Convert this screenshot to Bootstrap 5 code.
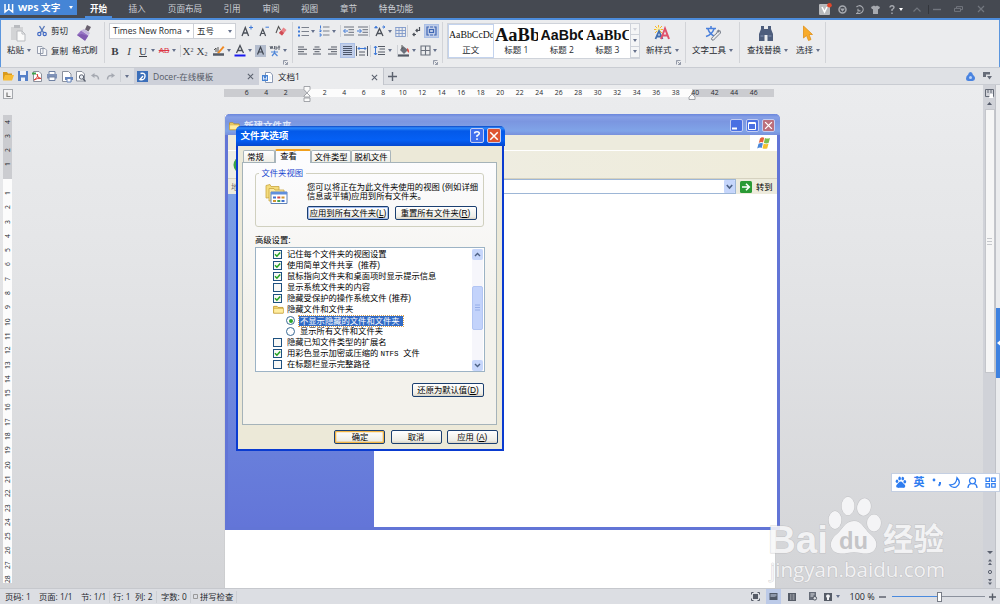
<!DOCTYPE html>
<html lang="zh-CN">
<head>
<meta charset="utf-8">
<title>WPS 文字 - 文档1</title>
<link href="https://cdn.jsdelivr.net/npm/bootstrap@5.3.0/dist/css/bootstrap.min.css" rel="stylesheet">
<script src="https://cdn.jsdelivr.net/npm/bootstrap@5.3.0/dist/js/bootstrap.bundle.min.js"></script>
<style>
*{box-sizing:border-box}
body{width:1000px;height:604px;overflow:hidden;margin:0;font:8.5px/12px "Open Sans","Noto Sans CJK SC",sans-serif;color:#25282e;background:#ebecee}
svg{display:block;overflow:visible;flex:none}
.tracks{display:grid;justify-items:start;align-items:center;white-space:nowrap}
.caret{width:0;height:0;border:2.5px solid transparent;border-top:3px solid #66718c;border-bottom:0}
.vsep{width:1px;height:12px;background:#cdd0d5}
.ml2{margin-left:2px}
/* title bar */
.titlebar{height:20px;background:#454951;border-bottom:2px solid #4c8cdb;color:#cdd0d6;font-size:8.6px}
.brand{width:76.5px;height:15px;background:#4585d6;color:#fff;font-weight:700;font-size:9.6px;padding-left:4px;gap:4px}
.brand .caret,.helpmark .caret{border-top-color:#fff}
.menus{grid-template-columns:39px 38px 58px 36px 42px 35px 43px 52px;justify-items:center;margin-left:2.5px;height:18px}
.menus>*{height:18px;line-height:18px}
.menus .on{color:#fff;font-weight:700;border-bottom:2px solid #4c8cdb;padding:0 4.5px}
.sysicons{grid-template-columns:19px 17px 16px 18px 24.5px 14.5px 5px 21px 23.5px 16px;margin-left:396.5px;height:18px}
.sysicons .vsep{background:#33363c;height:9px}
/* ribbon */
.ribbon{height:47px;border-left:1px solid #5b96de;border-right:1px solid #5b96de;background:#ebecee}
.grp{position:relative;border-right:1px solid #d2d4d8;height:41px;margin-top:2px}
.g1{width:104px;padding-left:4px}.g2{width:188px;padding-left:4px}.g3{width:150px}.g4{width:243px;padding-left:4px}.g5{width:54px;padding-left:6px}.g6{width:86px;padding-left:7px}
.ic{height:22px;display:flex;align-items:center;justify-content:center}
.bigb{height:38px}
.bigb .lbl{display:flex;align-items:center;gap:3px;height:12px}
.bigb.paste{margin-right:6px}.bigb.paste .lbl{padding-left:2px}
.bigb.newst{margin-left:6px}
.r1{height:18px}.r2{height:21px}
.launch{position:absolute;right:4px;bottom:-2px}
.combo{height:16px;background:#fff;border:1px solid #cdd0d6;display:flex;align-items:center;justify-content:space-between;padding:0 3px}
.combo.sz{width:42px}
.t2a{grid-template-columns:85px 47px 17px 17px 14px}
.t2b{grid-template-columns:14px 14px 13.5px 7.5px 13.5px 8px 2.5px 14px 17px 13.5px 7.5px 13.5px 7.5px 14px 13.5px 6px}
.t3a{grid-template-columns:13px 8px 12.5px 8.5px 3px 14px 12px 5px 13.5px 7.5px 12px 5px 13px 14px;padding-left:5px}
.t3b{grid-template-columns:15px 14.5px 14.5px 15px 14px 4px 13.5px 9.5px 1px 13.5px 8.5px 12.5px 6px;padding-left:4px}
.hl{background:#c0cde8;outline:1px solid #aabfe6}
.ser{font-family:"Liberation Serif",serif;font-size:11px;width:12px;text-align:center;line-height:14px;color:#3b3f47}
.ser.sm{font:8px/14px "Liberation Sans",sans-serif}
.ser sup,.ser sub{font-size:6px}
.gallery{width:193px;height:36px;border:1px solid #cfd3da;background:#fff;margin-top:1px}
.sty{width:45.6px;height:34px;overflow:hidden;text-align:center}
.sty .s{display:block;height:20px;margin:0 1.5px;line-height:22px;font-family:"Liberation Serif",serif;white-space:nowrap;color:#111;overflow:hidden;text-align:left}
.sty.on{outline:1.5px solid #c3d3ee;outline-offset:-1px}
.sty .f0{font-size:9.8px;margin:0 1px}.f1{font-size:18.5px}.sty .f2{font:700 14.2px/22px "Liberation Sans"}.f3{font-size:14.5px}
.gscroll{width:9px;border-left:1px solid #cfd3da;background:#f4f5f6}
.gscroll>*{height:33.3%;display:flex;align-items:center;justify-content:center;border-bottom:1px solid #cfd3da}
/* document tabs */
.docbar{height:18px;background:#dfe1e5;border-top:1px solid #c9ccd2;border-bottom:1px solid #c9ccd2}
.quick{grid-template-columns:15px 14.5px 14.5px 15px 14.5px 14.5px 15px 14px 5px 10px;padding-left:2.5px;width:134px}
.dtab{height:17px;width:125px;padding:0 5px 0 3px;gap:5px}
.dtab.off{background:#cdd0d9;color:#555a66}.dtab.on{background:#ebecee;border-right:1px solid #c2c5cc;height:18px}
/* workspace */
.work{position:relative;height:503px;background:linear-gradient(#ebecee,#e4e5e7 35%,#d3d4d7);overflow:hidden}
.hruler{height:8px;width:550px;margin:4px 0 0 224px;padding-left:13px;background:linear-gradient(90deg,#cbccd0 82.5px,#fcfcfc 82.5px 468px,#cbccd0 468px);font:6.8px/8px "Open Sans",sans-serif}
.hruler span{width:19.5px;text-align:center;flex:none}
.vruler{position:absolute;left:3px;top:29.5px;width:9px;height:468px;background:linear-gradient(#cbccd0 64.5px,#fcfcfc 64.5px);font:6.8px/9px "Open Sans",sans-serif;overflow:hidden}
.vruler span{display:flex;align-items:center;justify-content:center;height:14.3px;transform:rotate(-90deg);width:9px}
.corner{position:absolute;left:2.5px;top:3.5px;width:10.5px;height:10.5px;border:1px solid #a6a9ae;background:#f4f4f5}
.mark1{position:absolute;left:303px;top:1px}.mark2{position:absolute;left:687.5px;top:9px}
.sheet{position:absolute;left:225px;top:30px;width:550px;height:473px;background:#fff;box-shadow:0 0 1px #aaa}
.vscroll{position:absolute;left:983px;top:0;width:13px;height:503px;background:#d0d2d8;border-right:1px solid #c0c2c8}
.edge{position:absolute;left:996px;top:0;width:4px;height:503px;background:#ebecee}
.handle{margin-top:223px;height:70px;background:#3f82e0}
.thumb{width:10px;height:264px;margin:0 0 0 1.5px;background:#f6f6f6;border:1px solid #c4c6cb}
.vbtns{margin:178px 0 0 3.5px}
/* explorer window */
.xp{font-family:"Liberation Sans","Noto Sans CJK SC",sans-serif;color:#000}
.explorer{position:absolute;left:225px;top:29px;width:555px;height:416px;border:3px solid #6275d6;border-top:0;border-radius:5px 5px 0 0;background:#fff}
.extitle{height:21px;margin:0 -3px;border-radius:5px 5px 0 0;background:linear-gradient(#6a86dc,#86a0e6 15%,#7b96e0 35%,#80a4e8 80%,#7890dc);padding:2px 5px 0 4px;color:#e0e8fa;font-size:9.5px;font-weight:700}
.wb{width:13.5px;height:13.5px;border:1px solid #c3cdf2;border-radius:2px;background:#4a70e2;display:flex;align-items:center;justify-content:center}
.wb.cl{background:#bb6f7c}
.wgap{gap:2.5px}
.exmenu{height:16px;background:#edebdd;border-bottom:1px solid #fff}
.flag{width:27px;height:15px;background:#fff;display:flex;align-items:center;justify-content:center}
.extool{height:28px;background:linear-gradient(90deg,#eeeee6,#efecdb);border-bottom:1px solid #d6d2c0}
.exaddr{height:15px;background:#edebdd;font-size:8.3px;white-space:nowrap}
.exlab{width:25px;padding-left:3px;color:#777}
.exfield{width:483px;height:15px;border:1px solid #9db6d6;background:#fff;display:flex;justify-content:flex-end}
.exside{width:145.5px;height:333px;background:linear-gradient(#7ba0e6,#6375d8)}
/* options dialog */
.dlg{position:absolute;left:236px;top:40.5px;width:268px;height:325.5px;border:solid #0a3bd0;border-width:0 2.5px 2.5px;border-radius:5px 5px 0 0;background:#ece9d8;font-size:8.3px;line-height:9px}
.dtitle{height:20px;margin:0 -2.5px;padding:0 3.5px 0 5px;border-radius:5px 5px 0 0;background:linear-gradient(#0947c4,#2e8afc 10%,#0459e8 25%,#0560f5 70%,#0548cf);color:#fff;font-weight:700;font-size:9.6px}
.dtitle .wb{width:14.5px;height:14.5px;background:#3f6fee}.dtitle .wb.cl{background:#de5430}
.tabs{height:16px;padding:0 0 0 5px;align-items:flex-end}
.tb{height:12px;border:1px solid #a9b5bb;border-bottom:0;border-radius:2px 2px 0 0;background:linear-gradient(#fff,#efeee6);text-align:center;line-height:12.5px}
.tb.on{height:14px;border-top:2px solid #f0a01e;background:#fcfcfe;margin-bottom:-1px;z-index:1;line-height:10px}
.tw1{width:32px;padding-right:7px}.tw2{width:36px;padding-right:9px}.tw3{width:40px}
.panel{width:255px;height:263px;margin-left:4px;border:1px solid #a5b3b9;background:linear-gradient(#fcfcfe,#f3f2ec 55%);padding:5px 12px 0}
.fs{height:59px;width:229px;position:relative}
.fs .box{position:absolute;inset:5px 0 0 0;border:1px solid #d0d0bf;border-radius:3px}
.fs .cap{position:absolute;left:4px;top:1px;padding:0 2.5px;background:#fbfbfc;color:#1745cf;line-height:9px}
.fsin{padding:16.5px 0 0 10px}
.fstext{margin-left:19px;margin-top:-1px;line-height:8.6px;white-space:nowrap}
.fsbtn{gap:5.5px;margin-top:5.5px}
.advlab{margin:9.5px 0 2px}
.xbtn{border:1px solid #1b3f70;border-radius:2px;background:linear-gradient(#fff,#eeede6 80%,#d8d2c4);text-align:center;height:14px;line-height:12px;white-space:nowrap}
.xbtn.foc{box-shadow:inset 0 0 0 1px #a3bdf0}.xbtn.def{box-shadow:inset 0 0 0 1.3px #f3b544}
.b1{width:82px}.b2{width:82px}.b3{width:72px}.b4{width:51px}
.xl{width:230px;height:125px;border:1px solid #9cb3c5;background:#fff;padding:.5px 1px 0 17px}
.xl .item{height:11.1px;display:flex;align-items:center;gap:5px;white-space:pre}
.xl .item.fo{gap:3px}
.ck{width:9px;height:9px;border:1px solid #1e5180;background:#f8f8f6;flex:none}
.rd{width:9px;height:9px;border:1px solid #3a6a95;border-radius:50%;background:#fff;flex:none;margin-left:13px;display:flex;align-items:center;justify-content:center}
.rd.on::after{content:"";width:4px;height:4px;border-radius:50%;background:#2aa52a}
.sel{background:#316ac5;color:#fff;outline:1px dotted #d8a050;line-height:10px;width:104px;margin-left:-1px;padding-left:1px}
.ntfs{font-family:"Liberation Mono",monospace;font-size:7.5px}
.xsb{width:11px;height:121px;background:#f6f6fb}
.xsb .sb{height:11px;background:#c6d6fb;border-radius:2px;display:flex;align-items:center;justify-content:center}
.xsb .up{transform:scaleY(-1)}
.xsb .th{height:44px;margin-top:26px;margin-bottom:30px;background:#c3d3fb;border:1px solid #b2c5f3;border-radius:2px;display:flex;align-items:center;justify-content:center}
.resetrow{margin-top:11px;width:229px}
.okrow{gap:5.2px;padding:5.5px 4.2px 0 0}
/* overlays */
.ime{position:absolute;left:890.5px;top:387.5px;width:109.5px;height:19px;background:#fff;border:1px solid #c4cfe2;color:#2f7df0;font-weight:700;font-size:11px;padding:0 3px}
.logo{position:absolute;left:766px;top:408px}
/* status bar */
.status{height:16px;background:#dcdee3;border-top:1px solid #c6c8cd}
.st1{grid-template-columns:34px 42px 28px 4px 22px 21px 5px 29px 3px 7px 35.5px 2px;padding-left:5px;font-size:8.3px;width:740px}
.st2{grid-template-columns:16.5px 19px 18.5px 15px 14px 14px 29px 13px 95px 10px;padding-left:10.5px}
.st2 .act{margin-left:-1px}
.pct{font-size:9px}
.slider{width:93px;height:8px;display:flex;align-items:center}
.slider .a{width:45px;height:1px;background:#4a8ade}.slider .b{width:43px;height:1px;background:#8b919d}.slider .k{width:5px;height:10px;border:1px solid #777c86;background:#fff}
</style>
</head>
<body class="d-flex flex-column">
<svg width="0" height="0" class="position-absolute">
 <defs>
  <symbol id="fold" viewBox="0 0 12 10"><path d="M.5 9V1.500h4l1 1.200H11V9z" fill="#f4d873" stroke="#b88a1c" stroke-width=".8"/><path d="M.6 9V3.800h10.900V9z" fill="#ffeda0" stroke="#c49b30" stroke-width=".6"/></symbol>
  <symbol id="xx" viewBox="0 0 8 8"><path d="M1 1l6 6M7 1L1 7" stroke="currentColor" stroke-width="1.2"/></symbol>
  <symbol id="tick" viewBox="0 0 7 7"><path d="M1 3.200l1.900 2L6.200 1.400" fill="none" stroke="#21a121" stroke-width="1.500"/></symbol>
  <symbol id="chev" viewBox="0 0 8 6"><path d="M1 1.300l3 3 3-3" fill="none" stroke="#4d6185" stroke-width="1.700"/></symbol>
  <symbol id="lau" viewBox="0 0 5 5"><path d="M.5 4.500v-4h4M2 4.500h2.500V2M1.600 1.600l2.600 2.600" fill="none" stroke="#7f8797" stroke-width=".8"/></symbol>
  <symbol id="paw" viewBox="0 0 54 60"><ellipse cx="7" cy="26" rx="6.400" ry="9"/><ellipse cx="20" cy="12" rx="6.400" ry="9.300"/><ellipse cx="36" cy="13" rx="6.800" ry="8.800" transform="rotate(12 36 13)"/><ellipse cx="46" cy="29" rx="7" ry="8.400"/><path d="M26 27c8 0 10 8 16 13s8 10 5 15-9 5-14 4-9-1-14 0-12 1-15-4 0-11 5-15 8-13 17-13z"/></symbol>
 </defs>
</svg>

<header class="titlebar d-flex">
 <div class="brand d-flex align-items-center"><svg width="10" height="10" viewBox="0 0 10 10"><path d="M1 1v8l3.800-3L8.600 9V1M4.800 1v5" fill="none" stroke="#fff" stroke-width="1.500"/></svg><span class="me-auto">WPS 文字</span><i class="caret me-1"></i></div>
 <nav class="menus tracks"><span class="on">开始</span><span>插入</span><span>页面布局</span><span>引用</span><span>审阅</span><span>视图</span><span>章节</span><span>特色功能</span></nav>
 <div class="sysicons tracks">
  <svg width="13" height="12" viewBox="0 0 13 12"><rect y="1" width="11" height="11" rx="1" fill="#b8babd"/><path d="M3 4l2.500 5L8 4" fill="none" stroke="#fff" stroke-width="1.600"/><circle cx="10.500" cy="2.200" r="2.300" fill="#e2472b"/></svg>
  <svg width="9" height="9" viewBox="0 0 9 9"><circle cx="4.500" cy="4.500" r="3.500" fill="none" stroke="#a6a9af" stroke-width="1.500"/><path d="M2 3.600h5L4.500 6.700z" fill="#a6a9af"/></svg>
  <svg width="9" height="9" viewBox="0 0 9 9"><path d="M1.500 2A3.800 3.800 0 1 1 2 7.500M1 8.500h4M3 3.800v2h2.500" fill="none" stroke="#a6a9af" stroke-width="1.200"/></svg>
  <svg width="9" height="9" viewBox="0 0 9 9"><path d="M0 2L3 .5q1.500 1.400 3 0L9 2 8 4.300 7 4v5H2V4l-1 .3z" fill="#a6a9af"/></svg>
  <span class="helpmark d-flex align-items-center gap-1"><svg width="6" height="9" viewBox="0 0 6 9"><path d="M1 2.500Q1 .8 3 .8t2 1.800Q5 3.600 3 4.600V6M3 7.400V9" fill="none" stroke="#a6a9af" stroke-width="1.400"/></svg><i class="caret"></i></span>
  <svg width="8" height="5" viewBox="0 0 8 5"><path d="M.5 4.500L4 1l3.500 3.500" fill="none" stroke="#72767e" stroke-width="1.200"/></svg>
  <i class="vsep"></i>
  <svg width="8" height="3" viewBox="0 0 8 3"><path d="M0 1.500h8" stroke="#72767e" stroke-width="1.400"/></svg>
  <svg width="9" height="6" viewBox="0 0 9 6"><path d="M2.500 2V.6h6v3H7M.5 2.400h6v3h-6z" fill="none" stroke="#72767e"/></svg>
  <svg width="8" height="8" color="#72767e"><use href="#xx"/></svg>
 </div>
</header>

<section class="ribbon d-flex">
 <div class="grp g1 d-flex">
  <div class="bigb paste"><div class="ic"><svg width="16" height="17" viewBox="0 0 16 17"><path d="M1 2h12v13H1z" fill="#d3d4d6"/><path d="M4 0h6v3H4z" fill="#b9bbbf"/><path d="M7 6h5l3 3v7H7z" fill="#fafafa" stroke="#b9bbbf"/><path d="M12 6v3h3" fill="none" stroke="#b9bbbf"/></svg></div><div class="lbl">粘贴<i class="caret"></i></div></div>
  <div class="me-1"><div class="d-flex align-items-center r1 gap-1"><svg width="10" height="10" viewBox="0 0 10 10"><path d="M2.500 0l4 6.700M7.500 0l-4 6.700" stroke="#5778b8" stroke-width="1.300"/><circle cx="2.300" cy="8" r="1.600" fill="none" stroke="#3f68c4" stroke-width="1.200"/><circle cx="7.700" cy="8" r="1.600" fill="none" stroke="#3f68c4" stroke-width="1.200"/></svg>剪切</div>
  <div class="d-flex align-items-center r2 gap-1"><svg width="10" height="10" viewBox="0 0 10 10"><path d="M.5.500h4.500l1 1v6H.500zM3.500 2.500H8l1.700 1.700v5.300H3.500z" fill="#f6f7f9" stroke="#8c94a6" stroke-width=".9"/></svg>复制</div></div>
  <div class="bigb"><div class="ic"><svg width="15" height="16" viewBox="0 0 15 16"><path d="M10 0l4 2-2.500 4.500L8 4.500z" fill="#68606e"/><path d="M4 5.500l3-1.500 6 4-1.500 2z" fill="#c3b5dc"/><path d="M4 5.500l7.500 5L8 15.800 0 10z" fill="#9673c4"/><path d="M0 10l5-1 6 2-3 4.800z" fill="#8059b0"/></svg></div><div class="lbl">格式刷</div></div>
 </div>
 <div class="grp g2">
  <div class="tracks t2a r1">
   <div class="combo w-100"><span>Times New Roma</span><i class="caret"></i></div><div class="combo sz border-start-0"><span>五号</span><i class="caret"></i></div>
   <svg width="12" height="12" viewBox="0 0 12 12"><path d="M1 11L4.300 2.500 7.600 11M2.300 8h4" fill="none" stroke="#4a4f58" stroke-width="1.300"/><path d="M10 .5v4M8 2.500h4" stroke="#3f7ad8"/></svg>
   <svg width="12" height="12" viewBox="0 0 12 12"><path d="M2 11l2.800-7 2.800 7M3 8.500h3.600" fill="none" stroke="#4a4f58" stroke-width="1.200"/><path d="M7.500 2.200H11" stroke="#3f7ad8"/></svg>
   <svg width="12" height="12" viewBox="0 0 12 12"><path d="M1 8L3.500 1.500 5.500 5" fill="none" stroke="#555" stroke-width="1.100"/><path d="M4 8l4.500-5.500L11.500 5 7 10.500z" fill="#e8848a"/><path d="M4 8l2-2.500L9 8l-2 2.500z" fill="#d04c55"/></svg>
  </div>
  <div class="tracks t2b r2">
   <b class="ser">B</b><i class="ser">I</i><u class="ser">U</u><i class="caret"></i>
   <s class="ser sm text-danger">AB</s><i class="caret"></i><i class="vsep"></i>
   <span class="ser">X<sup>2</sup></span><span class="ser">X<sub>2</sub></span>
   <svg width="12" height="12" viewBox="0 0 12 12"><path d="M1 5l2-2v4M5 7V2" stroke="#555" fill="none"/><path d="M4 8l6-7 1.500 1.200L6 8.500z" fill="#f08a24"/><path d="M0 9.500h11" stroke="#555b66" stroke-width="2.500"/></svg><i class="caret"></i>
   <svg width="12" height="12" viewBox="0 0 12 12"><path d="M2.500 8L6 .5 9.500 8M4 5.500h4" fill="none" stroke="#4a4f58" stroke-width="1.300"/><path d="M.5 10.500h11" stroke="#1a1af0" stroke-width="2"/></svg><i class="caret"></i>
   <svg width="11" height="12" viewBox="0 0 11 12"><path d="M0 0h11v12H0z" fill="#b4bdce"/><path d="M2.500 9.500L5.500 2l3 7.500M3.500 7h4" fill="none" stroke="#3c424d" stroke-width="1.200"/></svg>
   <svg width="12" height="12" viewBox="0 0 12 12"><path d="M1 1l1 3 1-3 1 3M5.500 1v3h2.500V2H6M10 .5V5M8.800 2h2.400" fill="none" stroke="#555b66" stroke-width=".9"/><path d="M2 7h7M5.500 5.500V8L3 11M5.500 8L8.500 11" fill="none" stroke="#4f86d8" stroke-width="1.200"/></svg><i class="caret"></i>
  </div>
  <svg class="launch" width="5" height="5"><use href="#lau"/></svg>
 </div>
 <div class="grp g3">
  <div class="tracks t3a r1">
   <svg width="12" height="11" viewBox="0 0 12 11"><path d="M3.500 1.500H11M3.500 5.500H11M3.500 9.500H11" stroke="#7b818d"/><path d="M0 1.500h2M0 5.500h2M0 9.500h2" stroke="#3f7ad8" stroke-width="2"/></svg><i class="caret"></i>
   <svg width="12" height="12" viewBox="0 0 12 12"><path d="M4 2h6.500M4 6h6.500M4 10h6.500" stroke="#7b818d"/><path d="M1.500.500v3M.5 5h1.500v1.500H.5M.5 9h1.500v2H.5" fill="none" stroke="#3f7ad8"/></svg><i class="caret"></i><i class="vsep"></i>
   <svg width="11" height="10" viewBox="0 0 11 10"><path d="M1 1h10M5.500 3.700H11M5.500 6.300H11M1 9h10" stroke="#6a707c"/><path d="M5 5H1M2.500 3L.5 5l2 2" fill="none" stroke="#3f7ad8"/></svg>
   <svg width="11" height="10" viewBox="0 0 11 10"><path d="M1 1h10M5.500 3.700H11M5.500 6.300H11M1 9h10" stroke="#6a707c"/><path d="M0 5h4M2.500 3l2 2-2 2" fill="none" stroke="#3f7ad8"/></svg><i class="vsep"></i>
   <svg width="12" height="12" viewBox="0 0 12 12"><path d="M2 11L5.500 3.500 9 11M3.500 8.500h4" fill="none" stroke="#4a4f58" stroke-width="1.300"/><path d="M.5 3l1.500-2 1.500 2zM8 2h3M9.500.5L11 2 9.500 3.500" fill="#3f7ad8" stroke="#3f7ad8" stroke-width=".7"/></svg><i class="caret"></i>
   <svg width="11" height="11" viewBox="0 0 11 11"><path d="M.5 1.500h10M.5 4.500h10M.5 7.500h10M.5 10.500h10M.8 1v9.500M4 1v9.500M7.200 1v9.500M10.500 1v9.500" stroke="#7f98c8" stroke-width=".9"/></svg><i class="vsep"></i>
   <svg width="10" height="11" viewBox="0 0 10 11"><path d="M7.500 1v3.500H4M5.500 3L4 4.500 5.500 6M4 8.500H1M2.500 7L1 8.500 2.500 10" fill="none" stroke="#4a4f58" stroke-width="1.200"/></svg>
   <svg class="hl" width="13" height="12" viewBox="0 0 13 12"><path d="M4 2H2v8h2M9 2h2v8H9M4.500 4.500h4v3h-4zM5 2h3M5 10h3" fill="none" stroke="#3e66b4" stroke-width="1.200"/></svg>
  </div>
  <div class="tracks t3b r2">
   <svg width="10" height="9" viewBox="0 0 10 9"><path d="M1 1h6M1 3.300h9M1 5.700h6M1 8h9" stroke="#555b66"/></svg>
   <svg width="10" height="9" viewBox="0 0 10 9"><path d="M2.500 1h5M1 3.300h8M2.500 5.700h5M1 8h8" stroke="#555b66"/></svg>
   <svg width="10" height="9" viewBox="0 0 10 9"><path d="M4 1h6M1 3.300h9M4 5.700h6M1 8h9" stroke="#555b66"/></svg>
   <svg class="hl" width="13" height="13" viewBox="0 0 13 13"><path d="M2 2.500h9M2 4.500h9M2 6.500h9M2 8.500h9M2 10.500h9" stroke="#4c566b"/></svg>
   <svg width="12" height="10" viewBox="0 0 12 10"><path d="M.5 0v10M11.500 0v10M3 6h6M3 9h6" stroke="#555b66"/><path d="M2 2.500h8M3.500 1L2 2.500 3.500 4M8.500 1L10 2.500 8.500 4" fill="none" stroke="#3f7ad8"/></svg><i class="vsep"></i>
   <svg width="12" height="11" viewBox="0 0 12 11"><path d="M4 1.500h7M5.500 4h5.500M4 7h7M4 9.500h7" stroke="#555b66" stroke-width="1.200"/><path d="M1.500 1v9M0 3l1.500-2L3 3M0 8l1.500 2L3 8" fill="none" stroke="#3f7ad8"/></svg><i class="caret"></i><i class="vsep"></i>
   <svg width="12" height="12" viewBox="0 0 12 12"><path d="M5 1l5 4-4 4-4-4z" fill="#6b707b"/><path d="M4 0v4" stroke="#555"/><path d="M9 3q2.500 1 2 5L9 6z" fill="#d9534a"/><path d="M0 10.500h11" stroke="#555b66" stroke-width="2.200"/></svg><i class="caret"></i>
   <svg width="11" height="11" viewBox="0 0 11 11"><path d="M1 1h9v9H1zM5.500 1v9M1 5.500h9" fill="none" stroke="#6a707c" stroke-width="1.100"/></svg><i class="caret"></i>
  </div>
  <svg class="launch" width="5" height="5"><use href="#lau"/></svg>
 </div>
 <div class="grp g4 d-flex">
  <div class="gallery d-flex">
   <div class="sty on"><span class="s f0">AaBbCcDd</span>正文</div>
   <div class="sty"><b class="s f1">AaBb</b>标题 1</div>
   <div class="sty"><b class="s f2">AaBbC</b>标题 2</div>
   <div class="sty"><b class="s f3">AaBbC</b>标题 3</div>
   <div class="gscroll"><div><i class="caret opacity-25"></i></div><div><i class="caret"></i></div><div><i class="caret"></i></div></div>
  </div>
  <div class="bigb newst"><div class="ic"><svg width="16" height="16" viewBox="0 0 16 16"><path d="M4.500 0v8M1 1l7 7M8 1L1 8M0 4.500h9" stroke="#f5b52c"/><circle cx="4.500" cy="4.500" r="2.200" fill="#fff2a0"/><path d="M1.500 14L5 6l3.500 8M3 11.500h4" fill="none" stroke="#416fb0" stroke-width="1.800"/><path d="M7 14L11 3.500 15 14M8.500 10.500h5" fill="none" stroke="#e0526c" stroke-width="2"/></svg></div><div class="lbl">新样式<i class="caret"></i></div></div>
  <svg class="launch" width="5" height="5"><use href="#lau"/></svg>
 </div>
 <div class="grp g5"><div class="bigb"><div class="ic pe-1"><svg width="17" height="16" viewBox="0 0 17 16"><path d="M1 3.500h10M6 1v2.500M3 4q1.500 5 7 7.500M9 4Q7 9.500 1 11.500" fill="none" stroke="#4a80dc" stroke-width="1.500"/><path d="M15 5.500q1.500 3-1 4l-4 4q-1.500 2.500-3 1.500t1-3.500l4-3.500q0-3 1.800-3l-.5 2.200z" fill="#e9eaec" stroke="#737a88"/></svg></div><div class="lbl text-nowrap">文字工具<i class="caret"></i></div></div></div>
 <div class="grp g6 d-flex"><div class="bigb me-2"><div class="ic pe-1"><svg width="16" height="15" viewBox="0 0 16 15"><path d="M3 0h3v3h4V0h3v3l2 5v7H9.500V9h-3v6H1V8l2-5z" fill="#4d5d7c"/><path d="M2.500 10h3M10.500 10h3" stroke="#8494b5"/></svg></div><div class="lbl">查找替换<i class="caret"></i></div></div>
 <div class="bigb"><div class="ic"><svg width="10" height="15" viewBox="0 0 10 15"><path d="M.5 0l9 8.500H6l2 5-2.500 1-2-5L.5 12z" fill="#f8ab2a" stroke="#e08f18" stroke-width=".8"/></svg></div><div class="lbl">选择<i class="caret"></i></div></div></div>
</section>

<section class="docbar d-flex">
 <div class="quick tracks">
  <svg width="11" height="9" viewBox="0 0 11 9"><path d="M0 8V0h4l1 1.500h4V3" fill="#d99a1c"/><path d="M0 8.500L2 3h9L9 8.500z" fill="#f8bc35"/></svg>
  <svg width="10" height="10" viewBox="0 0 10 10"><path d="M0 0h10v10H0z" fill="#5580c8"/><path d="M2 0h6v4H2zM3 6.500h4V10H3z" fill="#eef2fa"/></svg>
  <svg width="10" height="11" viewBox="0 0 10 11"><path d="M1.500.500H7l2.500 2.500v7.500h-8z" fill="#fff" stroke="#8b919d"/><path d="M2 9q5-3 3-6 0 4 4 4.500-4-.5-7 1.500" fill="none" stroke="#dc4038"/><path d="M0 2.500h4" stroke="#3fa04a" stroke-width="2"/></svg>
  <svg width="10" height="10" viewBox="0 0 10 10"><path d="M2 3V.5h6V3" fill="#fff" stroke="#7082a4"/><path d="M0 3h10v4.500H0z" fill="#7f92b8"/><path d="M2 6h6v3.500H2z" fill="#fff" stroke="#7082a4"/></svg>
  <svg width="11" height="11" viewBox="0 0 11 11"><path d="M.5.500h6L9 3v7.500H.5z" fill="#fff" stroke="#8b919d"/><path d="M3 6h8v3H3z" fill="#6484bd"/><path d="M5 7.500h4V11H5z" fill="#fff" stroke="#6484bd"/></svg>
  <svg width="10" height="11" viewBox="0 0 10 11"><path d="M.5.500H6L8.500 3v7H.5z" fill="#fff" stroke="#8b919d"/><circle cx="5.500" cy="6" r="2.200" fill="#e8ecf3" stroke="#59606e"/><path d="M7 7.800L9.500 10.500" stroke="#59606e" stroke-width="1.300"/></svg>
  <svg width="9" height="7" viewBox="0 0 9 7"><path d="M3.500 0v5L0 2.500z" fill="#a5a9b1"/><path d="M3 2.500q4.500-.5 4.500 4" fill="none" stroke="#a5a9b1" stroke-width="1.500"/></svg>
  <svg width="9" height="7" viewBox="0 0 9 7"><path d="M5.500 0v5L9 2.500z" fill="#a5a9b1"/><path d="M6 2.500Q1.500 2 1.500 6.500" fill="none" stroke="#a5a9b1" stroke-width="1.500"/></svg>
  <i class="vsep"></i><i class="caret"></i>
 </div>
 <div class="dtab off d-flex align-items-center"><svg width="11" height="11" viewBox="0 0 11 11"><path d="M0 0h11v11H0z" fill="#3b6fba"/><path d="M3.500 2.500q5-1 4.500 3t-5 3L6 5" fill="none" stroke="#fff" stroke-width="1.400"/></svg><span class="me-auto">Docer-在线模板</span><svg width="7" height="7" color="#5b616e"><use href="#xx"/></svg></div>
 <div class="dtab on d-flex align-items-center"><svg width="11" height="11" viewBox="0 0 11 11"><path d="M3.500.500h5L10.500 3v7.500h-7z" fill="#fff" stroke="#8b9ab5"/><path d="M0 3h6v6H0z" fill="#4682d2"/><path d="M1.500 4.500v3l1.500-1 1.500 1v-3M7 5h2.500M7 7h2.500" fill="none" stroke="#dbe7fa"/></svg><span class="me-auto">文档1</span><svg width="7" height="7" color="#5b616e"><use href="#xx"/></svg></div>
 <div class="d-flex align-items-center ps-1"><svg width="9" height="9" viewBox="0 0 9 9"><path d="M4.500 0v9M0 4.500h9" stroke="#5b616e" stroke-width="1.400"/></svg></div>
 <div class="ms-auto d-flex align-items-center gap-2 pe-2"><svg width="9" height="9" viewBox="0 0 9 9"><path d="M4.500 0q2 0 2.300 2.500Q9 4.500 9 6.500T6.500 9h-4Q0 9 0 6.500t2.200-4Q2.500 0 4.500 0z" fill="#4a84e0"/><circle cx="4.500" cy="5.500" r="1.500" fill="#bcd3f8"/></svg><svg width="9" height="8" viewBox="0 0 9 8"><path d="M0 0h7v2.500H3V5H0zM4 4h5L6.500 7.500z" fill="#666c78"/></svg></div>
</section>

<main class="work">
 <div class="hruler d-flex" id="hr"></div>
 <div class="vruler" id="vr"></div>
 <div class="corner"><svg width="8" height="8" viewBox="0 0 8 8"><path d="M3 2.500v4h3.500" fill="none" stroke="#777" stroke-width="1.200"/></svg></div>
 <svg class="mark1" width="8" height="16" viewBox="0 0 8 16"><path d="M1 .5h6v3L4 7 1 3.500zM4 7l3 3v1H1v-1zM1 12h6v3.500H1z" fill="#fafafa" stroke="#8f9298" stroke-width=".8"/></svg>
 <svg class="mark2" width="8" height="6" viewBox="0 0 8 6"><path d="M4 0l3 3v2.500H1V3z" fill="#fafafa" stroke="#8f9298" stroke-width=".8"/></svg>
 <div class="sheet"></div>

 <section class="explorer xp">
  <div class="extitle d-flex align-items-center"><svg width="11" height="10"><use href="#fold"/></svg><span class="ms-1 me-auto">新建文件夹</span>
   <div class="d-flex wgap"><span class="wb"><svg width="8" height="8"><path d="M0 6.500h5" stroke="#fff" stroke-width="2"/></svg></span><span class="wb"><svg width="8" height="8"><path d="M.5 1h7v6.500h-7z" fill="none" stroke="#fff" stroke-width="1"/><path d="M.5 1h7" stroke="#fff" stroke-width="2"/></svg></span><span class="wb cl"><svg width="9" height="9" color="#fff"><use href="#xx"/></svg></span></div></div>
  <div class="exmenu d-flex justify-content-end"><div class="flag"><svg width="14" height="12" viewBox="0 0 14 12"><path d="M3 1.500Q5-.5 7.200.8L6 5.500Q4 4.500 1.800 6z" fill="#e8603a"/><path d="M8 1q2 1 5 0l-1.400 5Q9 7 6.900 5.700z" fill="#7fbf4a"/><path d="M1.500 6.700Q4 5.400 5.900 6.300L4.700 11Q3 10 .2 11.400z" fill="#4a86d8"/><path d="M6.700 6.600q2 1.200 4.800.2L10.200 11.400q-2.700 1-4.700-.2z" fill="#f4c030"/></svg></div></div>
  <div class="extool d-flex align-items-center ps-1"><svg width="18" height="18"><circle cx="9.500" cy="9" r="8" fill="#3aa346"/></svg></div>
  <div class="exaddr d-flex align-items-center"><span class="exlab">地址</span><div class="exfield"><svg width="11" height="13" viewBox="0 0 11 13"><rect width="11" height="13" rx="1" fill="#c6d6fb"/><path d="M2.800 5l2.700 3 2.700-3" fill="none" stroke="#4d6185" stroke-width="1.600"/></svg></div><svg class="ms-1" width="12" height="12" viewBox="0 0 12 12"><rect width="12" height="12" rx="1.500" fill="#2a9a35"/><path d="M2 6h7M6 2.700L9.300 6 6 9.300" fill="none" stroke="#fff" stroke-width="1.600"/></svg><span class="ps-1">转到</span></div>
  <div class="exside"></div>
 </section>

 <section class="dlg xp">
  <div class="dtitle d-flex align-items-center"><span class="me-auto">文件夹选项</span><div class="d-flex wgap"><span class="wb"><svg width="8" height="9" viewBox="0 0 8 9"><path d="M1.500 2.500Q1.700.8 4 .8t2.300 1.800Q6.300 3.700 4 4.800V6M4 7.200V9" fill="none" stroke="#fff" stroke-width="1.500"/></svg></span><span class="wb cl"><svg width="10" height="10" color="#fff"><use href="#xx"/></svg></span></div></div>
  <div class="tabs d-flex"><span class="tb tw1">常规</span><span class="tb on tw2">查看</span><span class="tb tw3">文件类型</span><span class="tb tw3">脱机文件</span></div>
  <div class="panel">
   <div class="fs"><div class="box"></div><span class="cap">文件夹视图</span>
    <div class="position-relative d-flex fsin">
     <svg width="23" height="20" viewBox="0 0 23 20"><path d="M1 14V1.500L5 .5l1 2h8V13z" fill="#f5dc7c" stroke="#c9a640" stroke-width=".8"/><path d="M4 17V4.500h5l1 1.500h9v10z" fill="#fbe9a0" stroke="#c9a640" stroke-width=".8"/><path d="M6 8h16v11.500H6z" fill="#fff" stroke="#5f82b8"/><path d="M6 8h16v2.500H6z" fill="#5f8fdd"/><path d="M8 12.500h3v2H8zM16.500 16h3v2h-3z" fill="#3f6fd0"/><path d="M12.300 12.500h3v2h-3z" fill="#d04848"/><path d="M16.500 12.500h3v2h-3zM8 16h3v2H8z" fill="#cf9530"/><path d="M12.300 16h3v2h-3z" fill="#46a050"/></svg>
     <div class="fstext">您可以将正在为此文件夹使用的视图 (例如详细<br>信息或平铺)应用到所有文件夹。
      <div class="d-flex fsbtn"><span class="xbtn foc b1">应用到所有文件夹(<u>L</u>)</span><span class="xbtn b2">重置所有文件夹(<u>R</u>)</span></div></div>
    </div></div>
   <div class="advlab">高级设置:</div>
   <div class="xl d-flex justify-content-between">
    <div>
     <div class="item"><i class="ck"><svg width="7" height="7"><use href="#tick"/></svg></i>记住每个文件夹的视图设置</div>
     <div class="item"><i class="ck"><svg width="7" height="7"><use href="#tick"/></svg></i>使用简单文件共享  (推荐)</div>
     <div class="item"><i class="ck"><svg width="7" height="7"><use href="#tick"/></svg></i>鼠标指向文件夹和桌面项时显示提示信息</div>
     <div class="item"><i class="ck"></i>显示系统文件夹的内容</div>
     <div class="item"><i class="ck"><svg width="7" height="7"><use href="#tick"/></svg></i>隐藏受保护的操作系统文件 (推荐)</div>
     <div class="item fo"><svg width="11" height="9"><use href="#fold"/></svg>隐藏文件和文件夹</div>
     <div class="item"><i class="rd on"></i><span class="sel">不显示隐藏的文件和文件夹</span></div>
     <div class="item"><i class="rd"></i>显示所有文件和文件夹</div>
     <div class="item"><i class="ck"></i>隐藏已知文件类型的扩展名</div>
     <div class="item"><i class="ck"><svg width="7" height="7"><use href="#tick"/></svg></i><span>用彩色显示加密或压缩的 <span class="ntfs">NTFS</span>  文件</span></div>
     <div class="item"><i class="ck"></i>在标题栏显示完整路径</div>
    </div>
    <div class="xsb"><div class="sb"><svg class="up" width="7" height="5"><use href="#chev"/></svg></div><div class="th"><svg width="5" height="7"><path d="M0 1h5M0 3.500h5M0 6h5" stroke="#96aee8"/></svg></div><div class="sb"><svg width="7" height="5"><use href="#chev"/></svg></div></div>
   </div>
   <div class="d-flex justify-content-end resetrow"><span class="xbtn b3">还原为默认值(<u>D</u>)</span></div>
  </div>
  <div class="d-flex justify-content-end okrow"><span class="xbtn def b4">确定</span><span class="xbtn b4">取消</span><span class="xbtn b4">应用 (<u>A</u>)</span></div>
 </section>

 <aside class="vscroll">
  <div class="d-flex justify-content-center pt-1"><svg width="9" height="9" viewBox="0 0 9 9"><path d="M.5.500h8v7h-8zM3 .5V4M6 .5V4" fill="none" stroke="#636975"/><path d="M5 5h3v4H4z" fill="#fff"/></svg></div>
  <div class="d-flex justify-content-center py-1"><svg width="5" height="3"><path d="M0 3L2.500 0 5 3z" fill="#555b6a"/></svg></div>
  <div class="thumb d-flex align-items-center justify-content-center"><svg width="5" height="7"><path d="M0 .5h5M0 3.500h5M0 6.500h5" stroke="#c6c8cc"/></svg></div>
  <svg class="vbtns" width="6" height="35" viewBox="0 0 6 35"><path d="M0 0h6L3 3zM3 8L1 10.500h4zM3 11.500L1 14h4zM1 31.500h4L3 34zM1 28h4L3 30.500z" fill="#5b616f"/><circle cx="3" cy="21" r="1.600" fill="none" stroke="#5b616f"/></svg>
 </aside>
 <div class="edge"><div class="handle"><svg width="4" height="70"><path d="M1 35l3-2.500v5z" fill="#fff"/></svg></div></div>

 <svg class="logo" width="184" height="94" viewBox="0 0 184 94" fill="#f7f7f8" fill-opacity=".9" stroke="#a9a9ac" stroke-opacity=".45" stroke-width="1" paint-order="stroke">
  <text x="2" y="60" font-family="'Liberation Sans'" font-size="38" font-weight="700" textLength="60" lengthAdjust="spacingAndGlyphs">Bai</text>
  <use href="#paw" x="62" y="1" width="54" height="60"/>
  <text x="73" y="56" font-family="'Liberation Sans'" font-size="24" font-weight="700" fill="#bfbfc2" stroke="none" textLength="29" lengthAdjust="spacingAndGlyphs">du</text>
  <text x="117" y="57" font-family="'Noto Sans CJK SC'" font-size="31" font-weight="700" textLength="61" lengthAdjust="spacingAndGlyphs">经验</text>
  <text x="4" y="84" font-family="'Open Sans'" font-size="20" font-weight="500" textLength="175" lengthAdjust="spacingAndGlyphs">jingyan.baidu.com</text>
 </svg>
 <div class="ime d-flex align-items-center justify-content-between">
  <svg width="12" height="12" fill="#2f7df0"><use href="#paw"/></svg><span>英</span>
  <svg width="10" height="9" viewBox="0 0 10 9"><circle cx="2" cy="2" r="1.400" fill="#2f7df0"/><path d="M8 4v1.500q0 1.500-1.500 2.200" stroke="#2f7df0" stroke-width="2" fill="none"/></svg>
  <svg width="11" height="11" viewBox="0 0 11 11"><path d="M8 .8q5 5-.5 9Q3 11.500.8 8 7.500 8 8 .8z" fill="none" stroke="#2f7df0" stroke-width="1.300"/></svg>
  <svg width="11" height="11" viewBox="0 0 11 11"><circle cx="5.500" cy="3.800" r="3" fill="none" stroke="#2f7df0" stroke-width="1.300"/><path d="M1 11q0-3.500 3-4.500M10 11q0-3.500-3-4.500" fill="none" stroke="#2f7df0" stroke-width="1.300"/></svg>
  <svg width="11" height="11" viewBox="0 0 11 11"><path d="M1 1h3.500v3.500H1zM6.700 1h3.500v3.500H6.700zM1 6.700h3.500v3.500H1zM6.700 6.700h3.500v3.500H6.700z" fill="none" stroke="#2f7df0" stroke-width="1.200"/></svg>
 </div>
</main>

<footer class="status d-flex">
 <div class="st1 tracks flex-none"><span>页码: 1</span><span>页面: 1/1</span><span>节: 1/1</span><i class="vsep"></i><span>行: 1</span><span>列: 2</span><i class="vsep"></i><span>字数: 0</span><i class="vsep"></i><svg width="5" height="5"><path d="M.5.500h4v4h-4z" fill="none" stroke="#999"/></svg><span>拼写检查</span><i class="vsep"></i></div>
 <div class="st2 tracks">
  <svg width="9" height="9" viewBox="0 0 9 9"><path d="M2 2h5v5H2z" fill="#555b66"/><path d="M.5 2.500v-2h2M6.500.500h2v2M8.500 6.500v2h-2M2.500 8.500h-2v-2" fill="none" stroke="#555b66"/></svg>
  <svg class="act" width="15" height="15" viewBox="0 0 15 15"><path d="M0 0h15v15H0z" fill="#bccae8"/><path d="M3.500 4h8v7h-8z" fill="#4f5868"/><path d="M4.500 5h6v2L8.500 8h-4z" fill="#8d97aa"/></svg>
  <svg class="ml2" width="8" height="8" viewBox="0 0 8 8"><path d="M0 0h8v8H0z" fill="#555b66"/><path d="M2 2h1.500M4.500 2h2M2 4h1.500M4.500 4h2M2 6h1.500M4.500 6h2" stroke="#dcdee3" stroke-width=".8"/></svg>
  <svg class="ms-1" width="8" height="9" viewBox="0 0 8 9"><path d="M0 0h7v8H0z" fill="#666c78"/><path d="M1.500 2h4M1.500 4h3" stroke="#dcdee3"/><circle cx="5.800" cy="6.300" r="1.800" fill="#dcdee3" stroke="#555b66"/></svg>
  <svg class="ms-1" width="8" height="8" viewBox="0 0 8 8"><path d="M0 0h8v8H0z" fill="#555b66"/><path d="M4 1.500a1.700 1.700 0 0 1 1 3.200V7H3V4.700a1.700 1.700 0 0 1 1-3.200z" fill="#f2f3f5"/></svg>
  <i class="caret ml2"></i><span class="pct ml2">100 %</span>
  <svg class="ml2" width="7" height="2"><path d="M0 1h7" stroke="#555b66" stroke-width="1.400"/></svg>
  <div class="slider ml2"><i class="a"></i><i class="k"></i><i class="b"></i></div>
  <svg class="ms-1" width="8" height="8"><path d="M0 4h7M3.500.500v7" stroke="#555b66" stroke-width="1.400"/></svg>
 </div>
</footer>
<script>
const ruler=(id,list)=>document.getElementById(id).innerHTML=list.map(n=>`<span>${n||''}</span>`).join('');
ruler('hr',[6,4,2,...Array.from({length:24},(_,i)=>i*2)]);
ruler('vr',[4,3,2,1,...Array.from({length:29},(_,i)=>i)]);
</script>
</body>
</html>
